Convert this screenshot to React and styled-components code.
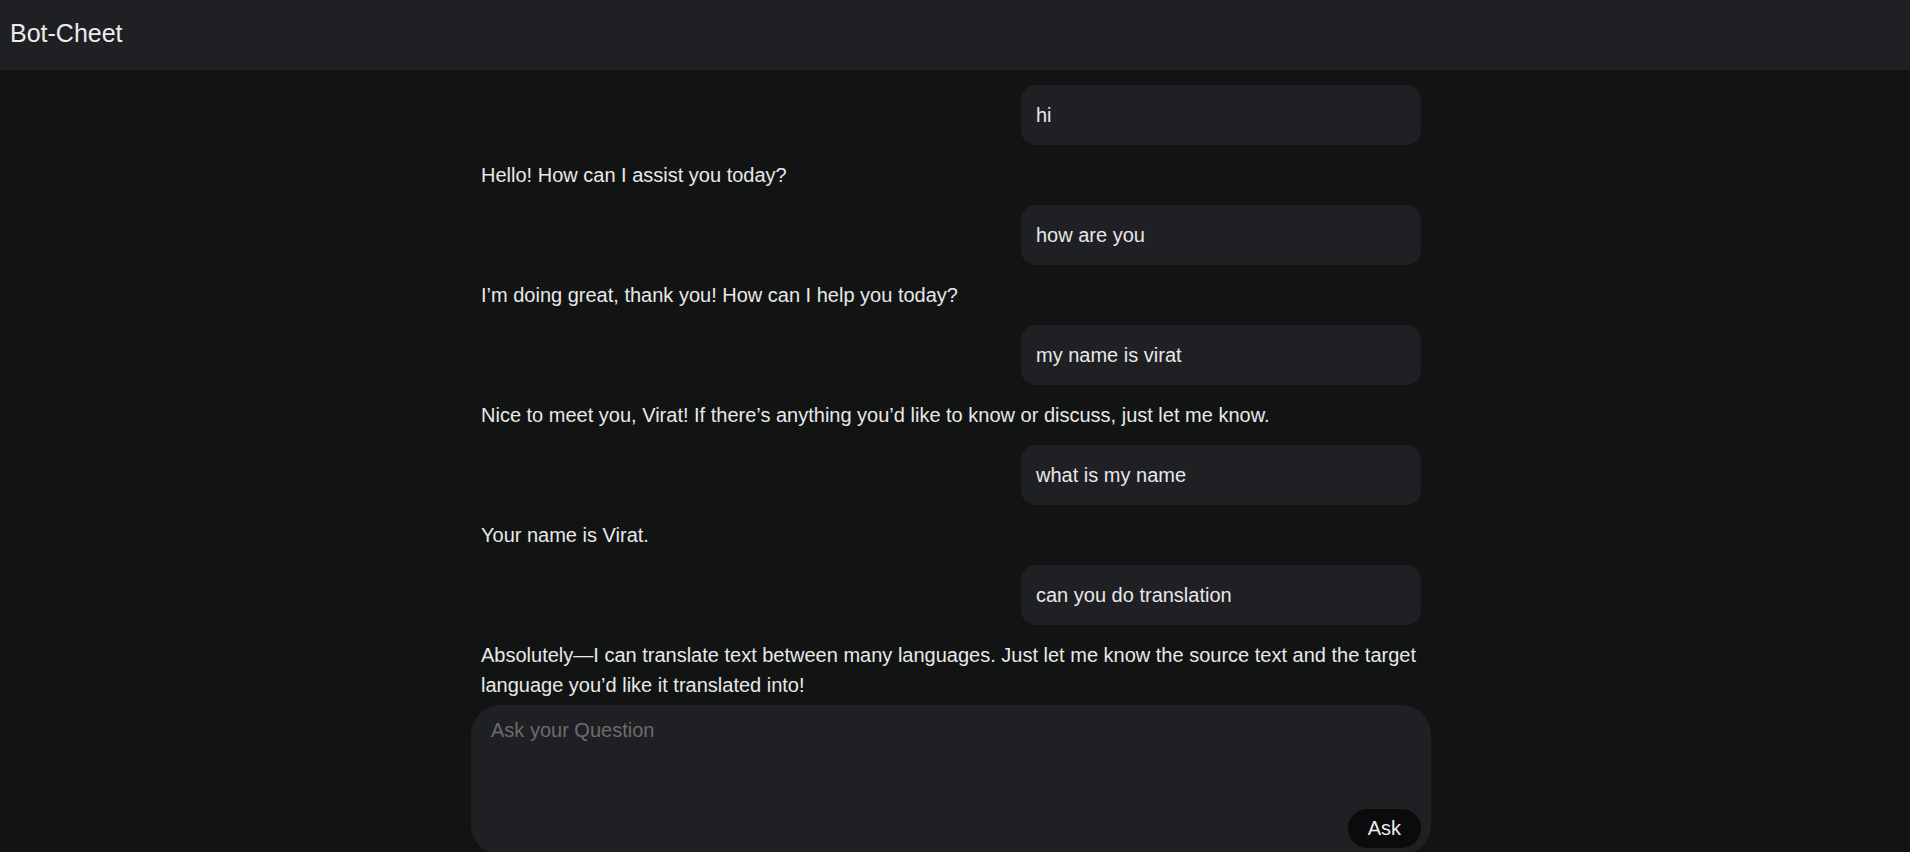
import React from 'react'
import styled, { createGlobalStyle } from 'styled-components'

const GlobalStyle = createGlobalStyle`
  html, body {
    margin: 0;
    padding: 0;
    overflow: hidden;
    background: #121414;
  }
  * {
    box-sizing: border-box;
  }
  body {
    font-family: "Liberation Sans", Arial, sans-serif;
    color: #e8e8e8;
  }
`

const Page = styled.div`
  display: flex;
  flex-direction: column;
  height: 100vh;
`

const Header = styled.header`
  display: flex;
  align-items: center;
  flex: 0 0 70px;
  padding: 0 10px 3px;
  background: #1f2023;
`

const Title = styled.h1`
  margin: 0;
  font-size: 25px;
  font-weight: 400;
  color: #ececec;
`

const Main = styled.main`
  flex: 1;
  display: flex;
  flex-direction: column;
  align-items: center;
  min-height: 0;
  padding-right: 8px;
  margin-bottom: -3px;
`

const Thread = styled.section`
  flex: 1;
  width: 960px;
  min-height: 0;
  overflow: hidden;
  padding: 15px 10px 0;
  display: flex;
  flex-direction: column;
`

const Message = styled.div`
  font-size: 20px;
  line-height: 30px;
  padding: ${(props) => (props.$user ? '15px' : '15px 0')};
  width: ${(props) => (props.$user ? '400px' : 'auto')};
  align-self: ${(props) => (props.$user ? 'flex-end' : 'stretch')};
  background: ${(props) => (props.$user ? '#1f2023' : 'transparent')};
  border-radius: 15px;
  color: #e8e8e8;
`

const Composer = styled.form`
  flex: 0 0 150px;
  width: 960px;
  display: flex;
  flex-direction: column;
  background: #1f2023;
  border-radius: 30px;
`

const Input = styled.textarea`
  flex: 1;
  resize: none;
  border: none;
  outline: none;
  background: transparent;
  padding: 14px 20px;
  font-family: "Liberation Sans", Arial, sans-serif;
  font-size: 20px;
  color: #e8e8e8;
  caret-color: #e8e8e8;

  &::placeholder {
    color: #6c6c6c;
  }
`

const Actions = styled.div`
  display: flex;
  justify-content: flex-end;
  padding: 0 10px 7px;
`

const AskButton = styled.button`
  height: 39px;
  padding: 0 20px;
  border: none;
  border-radius: 20px;
  background: #0b0b0b;
  color: #ececec;
  font-family: "Liberation Sans", Arial, sans-serif;
  font-size: 20px;
  cursor: pointer;
`

const messages = [
  { user: true, text: 'hi' },
  { user: false, text: 'Hello! How can I assist you today?' },
  { user: true, text: 'how are you' },
  { user: false, text: 'I\u2019m doing great, thank you! How can I help you today?' },
  { user: true, text: 'my name is virat' },
  {
    user: false,
    text: 'Nice to meet you, Virat! If there\u2019s anything you\u2019d like to know or discuss, just let me know.',
  },
  { user: true, text: 'what is my name' },
  { user: false, text: 'Your name is Virat.' },
  { user: true, text: 'can you do translation' },
  {
    user: false,
    text: 'Absolutely\u2014I can translate text between many languages. Just let me know the source text and the target language you\u2019d like it translated into!',
  },
]

const App = () => (
  <Page>
    <GlobalStyle />
    <Header>
      <Title>Bot-Cheet</Title>
    </Header>
    <Main>
      <Thread>
        {messages.map((m, i) => (
          <Message key={i} $user={m.user}>
            {m.text}
          </Message>
        ))}
      </Thread>
      <Composer onSubmit={(e) => e.preventDefault()}>
        <Input placeholder="Ask your Question" autoFocus />
        <Actions>
          <AskButton type="submit">Ask</AskButton>
        </Actions>
      </Composer>
    </Main>
  </Page>
)

export default App
